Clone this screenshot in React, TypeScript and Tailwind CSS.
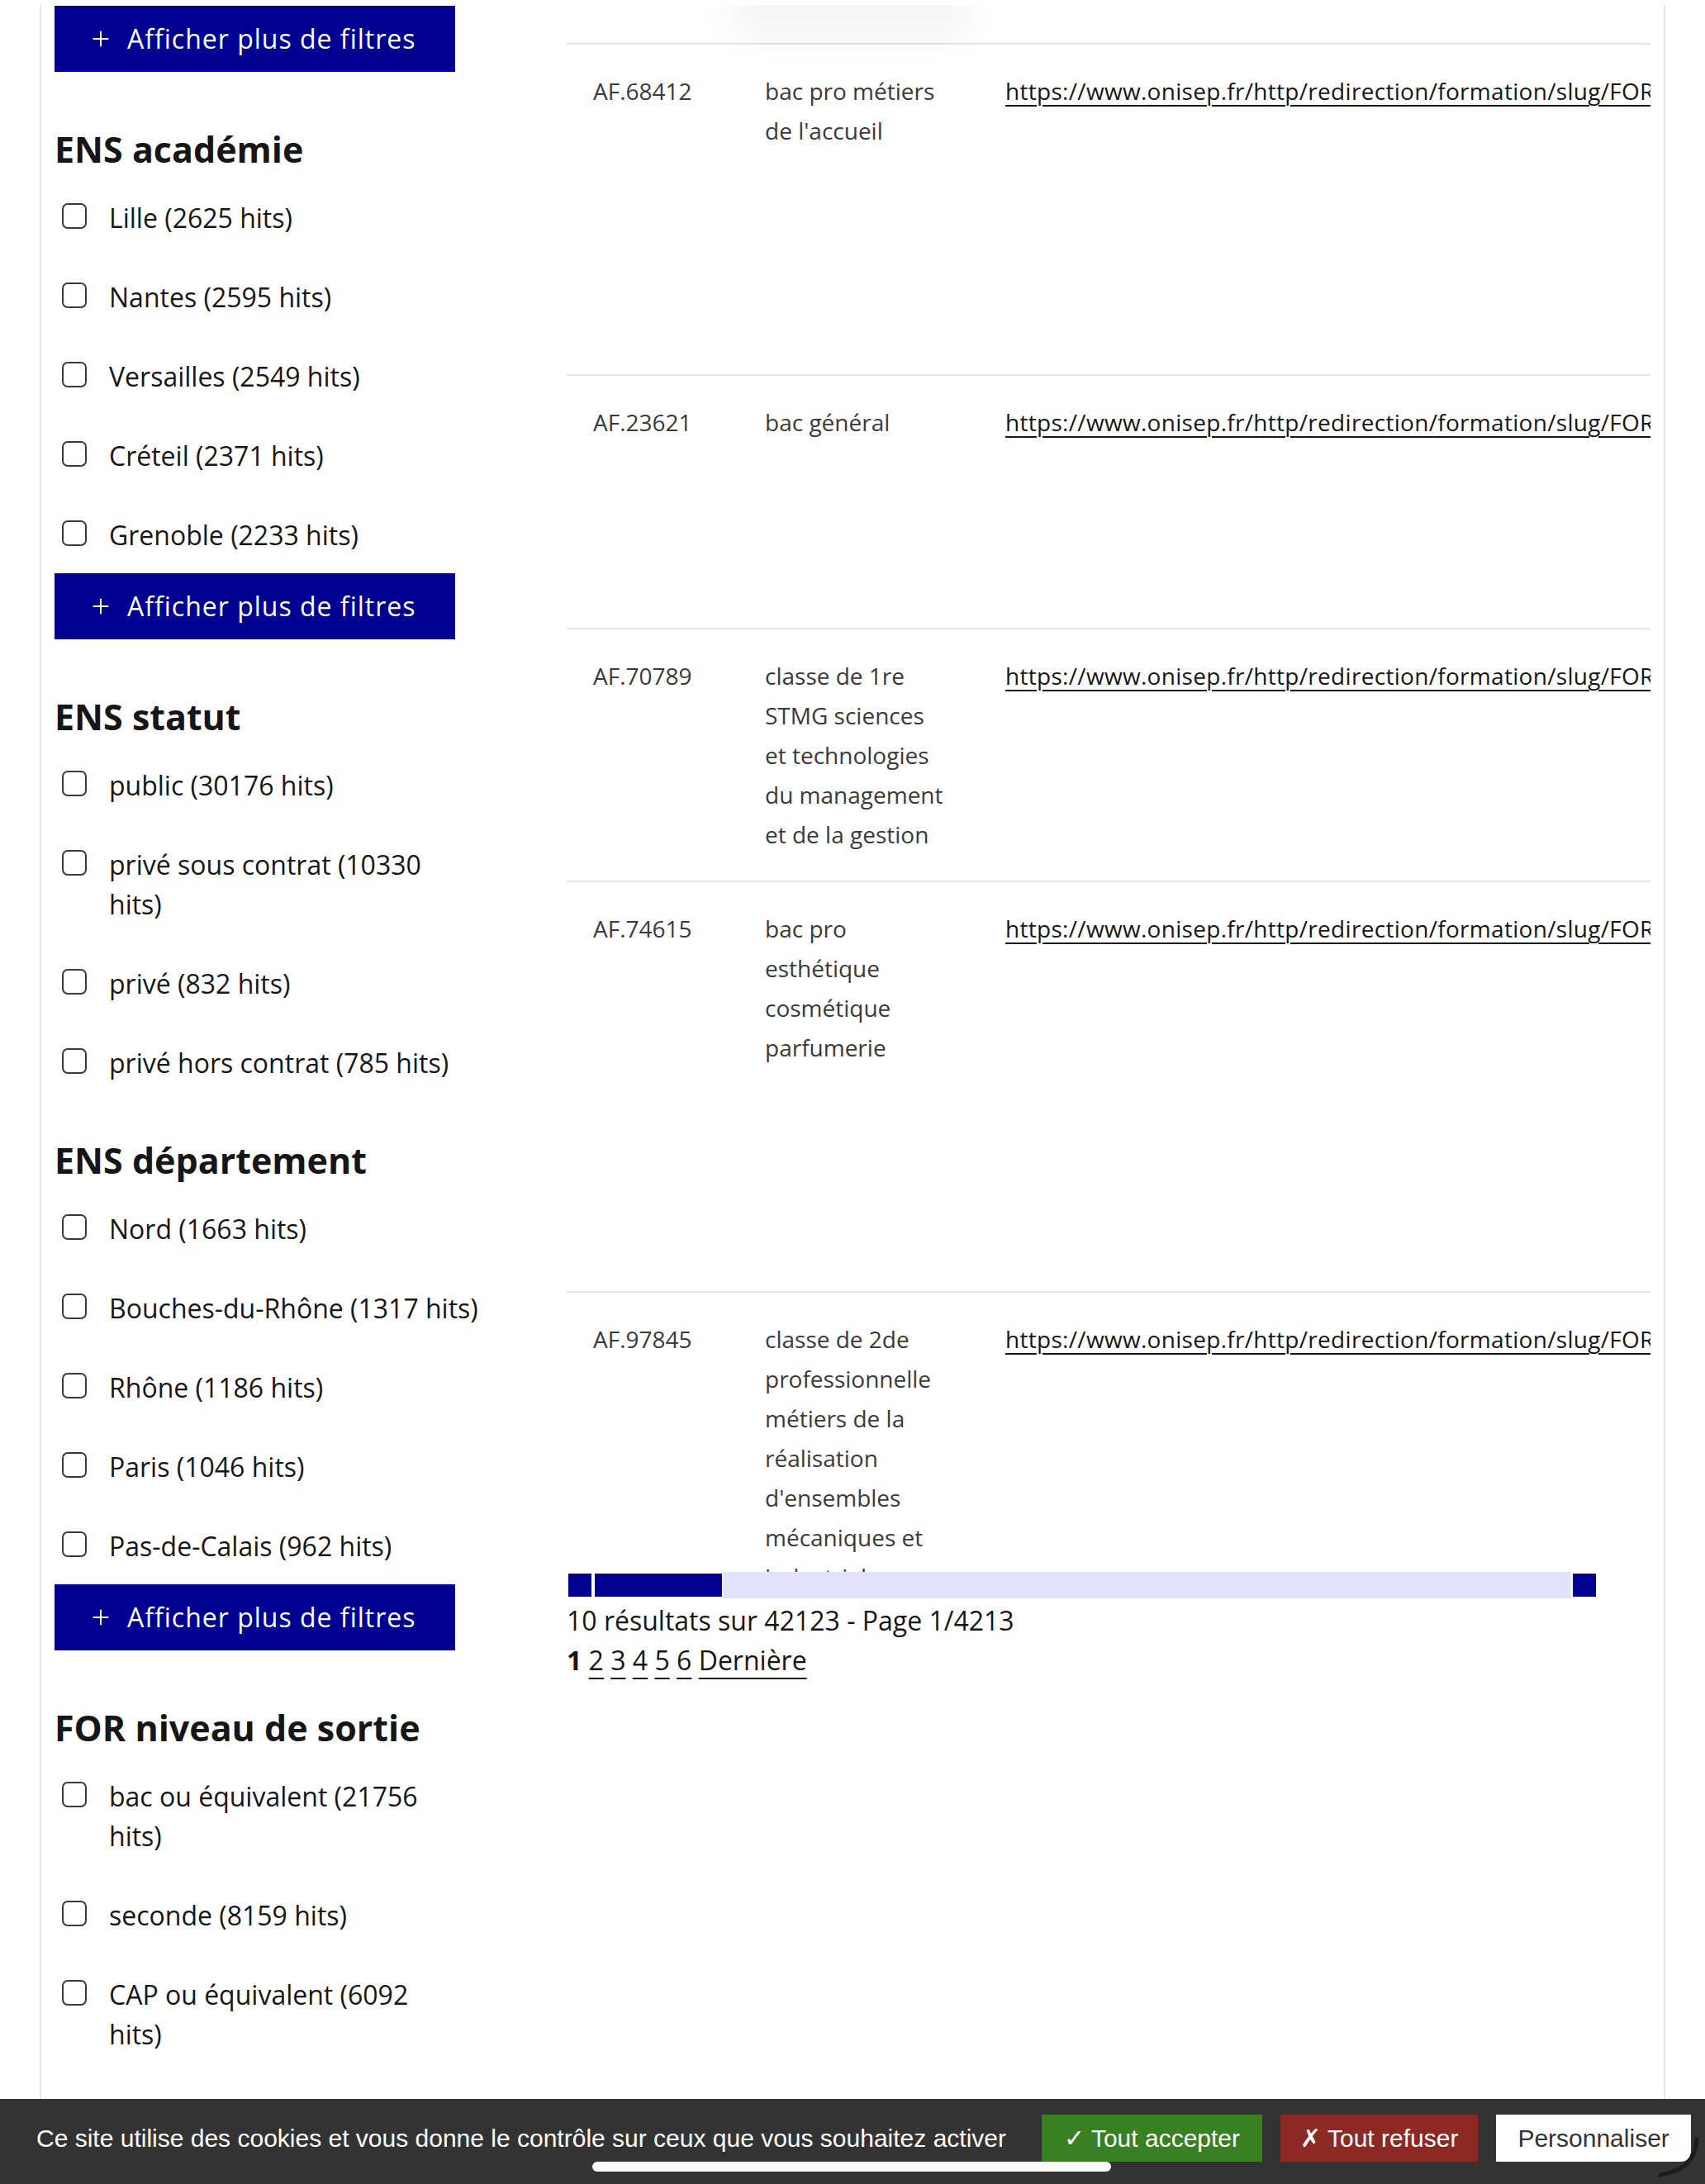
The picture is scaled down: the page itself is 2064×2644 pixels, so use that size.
import React from "react";

type FilterSection = { title: string; items: string[][]; more: boolean };

const sections: FilterSection[] = [
  {
    title: "ENS académie",
    items: [
      ["Lille (2625 hits)"],
      ["Nantes (2595 hits)"],
      ["Versailles (2549 hits)"],
      ["Créteil (2371 hits)"],
      ["Grenoble (2233 hits)"],
    ],
    more: true,
  },
  {
    title: "ENS statut",
    items: [
      ["public (30176 hits)"],
      ["privé sous contrat (10330", "hits)"],
      ["privé (832 hits)"],
      ["privé hors contrat (785 hits)"],
    ],
    more: false,
  },
  {
    title: "ENS département",
    items: [
      ["Nord (1663 hits)"],
      ["Bouches-du-Rhône (1317 hits)"],
      ["Rhône (1186 hits)"],
      ["Paris (1046 hits)"],
      ["Pas-de-Calais (962 hits)"],
    ],
    more: true,
  },
  {
    title: "FOR niveau de sortie",
    items: [
      ["bac ou équivalent (21756", "hits)"],
      ["seconde (8159 hits)"],
      ["CAP ou équivalent (6092", "hits)"],
    ],
    more: false,
  },
];

const rows = [
  { id: "AF.68412", label: ["bac pro métiers", "de l'accueil"], h: "h-[401px]" },
  { id: "AF.23621", label: ["bac général"], h: "h-[307px]" },
  {
    id: "AF.70789",
    label: ["classe de 1re", "STMG sciences", "et technologies", "du management", "et de la gestion"],
    h: "h-[306px]",
  },
  { id: "AF.74615", label: ["bac pro", "esthétique", "cosmétique", "parfumerie"], h: "h-[497px]" },
  {
    id: "AF.97845",
    label: [
      "classe de 2de",
      "professionnelle",
      "métiers de la",
      "réalisation",
      "d'ensembles",
      "mécaniques et",
      "industriels",
    ],
    h: "h-[497px]",
  },
];

const LINK = "https://www.onisep.fr/http/redirection/formation/slug/FOR.1494";

function MoreButton() {
  return (
    <button className="flex h-[80px] items-center bg-[#000091] pl-[40px] pr-[48px] text-[32px] leading-[48px] tracking-[1px] text-white">
      <svg viewBox="0 0 24 24" className="mr-[16px] h-[32px] w-[32px]" fill="currentColor">
        <path d="M11.25 11.25V5h1.5v6.25H19v1.5h-6.25V19h-1.5v-6.25H5v-1.5z" />
      </svg>
      Afficher plus de filtres
    </button>
  );
}

function Sidebar() {
  return (
    <aside className="w-[636px] shrink-0 pl-[16px] pt-[1px]">
      <MoreButton />
      {sections.map((s) => (
        <section key={s.title} className="mt-[66px]">
          <h3 className="text-[43px] font-bold leading-[56px] text-[#161616]">{s.title}</h3>
          <ul className="mt-[31px] flex flex-col gap-[48px]">
            {s.items.map((lines) => (
              <li key={lines[0]} className="flex items-start">
                <span className="ml-[9px] mt-[6px] h-[31px] w-[30px] shrink-0 rounded-[7px] border-2 border-[#3a3a3a] bg-white" />
                <span className="ml-[27px] whitespace-nowrap text-[32px] leading-[48px] text-[#161616]">
                  {lines.map((l, i) => (
                    <span key={i} className="block">
                      {l}
                    </span>
                  ))}
                </span>
              </li>
            ))}
          </ul>
          {s.more && (
            <div className="mt-[22px]">
              <MoreButton />
            </div>
          )}
        </section>
      ))}
    </aside>
  );
}

function Scrollbar() {
  return (
    <div className="flex h-[32px] w-[1248px] items-center pl-[2px] pr-[2px]">
      <div className="h-[28px] w-[28px] bg-[#000091]" />
      <div className="ml-[4px] h-[28px] w-[154px] bg-[#000091]" />
      <div className="ml-[1px] h-[32px] flex-1 bg-[#e3e3fd]" />
      <div className="ml-[2px] h-[28px] w-[28px] bg-[#000091]" />
    </div>
  );
}

function Results() {
  return (
    <div className="flex min-w-0 flex-1 flex-col pr-[16px]">
      <div className="h-[1897px] overflow-hidden pt-[46px]">
        <div className="-mt-[70px] ml-[195px] h-[70px] w-[300px] rounded-full bg-black/[0.03] blur-[16px]" />
        {rows.map((r) => (
          <div
            key={r.id}
            className={`flex border-t-2 border-[#e5e5e5] pt-[32px] text-[28px] leading-[48px] text-[#3a3a3a] ${r.h}`}
          >
            <div className="w-[208px] shrink-0 pl-[32px]">{r.id}</div>
            <div className="w-[291px] shrink-0 pl-[32px]">
              {r.label.map((l) => (
                <div key={l} className="whitespace-nowrap">
                  {l}
                </div>
              ))}
            </div>
            <div className="min-w-0 flex-1 overflow-hidden whitespace-nowrap pl-[32px]">
              <a className="tracking-[0.3px] text-[#161616] underline decoration-2 underline-offset-[6px]">{LINK}</a>
            </div>
          </div>
        ))}
      </div>
      <Scrollbar />
      <p className="mt-[3px] text-[32px] leading-[48px] text-[#161616]">10 résultats sur 42123 - Page 1/4213</p>
      <p className="text-[32px] leading-[48px] text-[#161616]">
        <span className="font-bold">1</span>{" "}
        {["2", "3", "4", "5", "6"].map((n) => (
          <React.Fragment key={n}>
            <a className="underline decoration-2 underline-offset-[9px]">{n}</a>{" "}
          </React.Fragment>
        ))}
        <a className="underline decoration-2 underline-offset-[9px]">Dernière</a>
      </p>
    </div>
  );
}

function CookieBanner() {
  return (
    <div className="fixed inset-x-0 bottom-0 h-[103px] bg-[#333333] font-['Liberation_Sans','DejaVu_Sans',sans-serif]">
      <div className="mt-[19px] flex h-[57px] items-center pl-[44px]">
        <span className="whitespace-nowrap text-[30px] text-white">
          Ce site utilise des cookies et vous donne le contrôle sur ceux que vous souhaitez activer
        </span>
        <div className="ml-[43px] flex h-full gap-[22px]">
          <button className="h-full whitespace-nowrap bg-[#388022] px-[27px] text-[30px] text-white">
            ✓ Tout accepter
          </button>
          <button className="h-full whitespace-nowrap bg-[#8d2925] px-[24px] text-[30px] text-white">
            ✗ Tout refuser
          </button>
          <button className="h-full whitespace-nowrap rounded-br-[12px] bg-white px-[26px] text-[30px] text-[#333333]">
            Personnaliser
          </button>
        </div>
      </div>
      {/* iOS home indicator + screen corner, drawn over the banner */}
      <div className="absolute left-[717px] top-[76px] h-[12px] w-[628px] rounded-full bg-[#fafafa]" />
      <svg className="absolute right-0 top-[40px] h-[63px] w-[64px]" viewBox="0 0 64 63" fill="none">
        <path d="M54 9 C52 32 42 46 10 52" stroke="#1c1c1c" strokeWidth="5" strokeLinecap="round" />
      </svg>
    </div>
  );
}

export default function App() {
  return (
    <div className="min-h-[2644px] bg-white font-['Open_Sans',sans-serif] text-[#161616]">
      <div className="mx-[48px] mt-[6px] flex min-h-[2638px] border-x-2 border-[#e5e5e5]">
        <Sidebar />
        <Results />
      </div>
      <CookieBanner />
    </div>
  );
}
